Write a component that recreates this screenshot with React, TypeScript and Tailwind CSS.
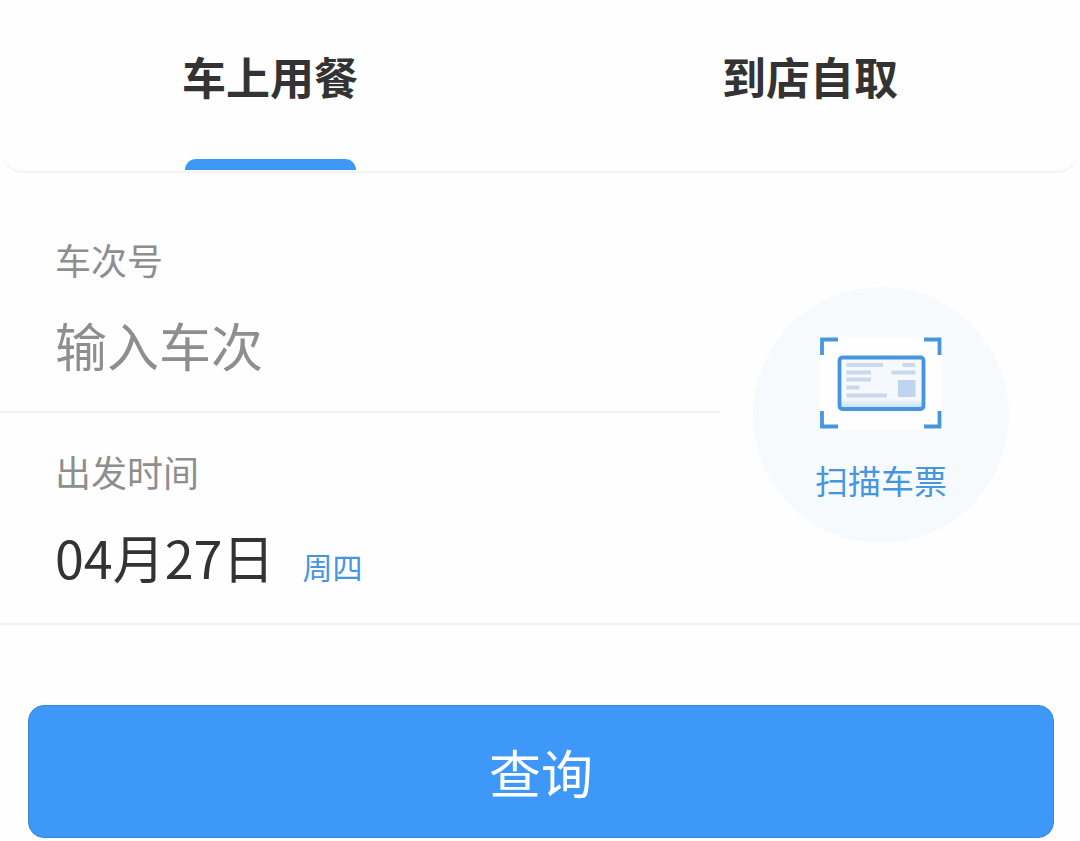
import React, { useState } from 'react';

const tabs = ['车上用餐', '到店自取'];

const TicketIcon = () => (
  <svg viewBox="0 0 122 93" className="w-[122px] h-[93px]" fill="none" aria-hidden="true">
    <defs>
      <linearGradient id="ticketFill" x1="0" y1="0" x2="0" y2="1">
        <stop offset="0.8" stopColor="#f5f9fe" />
        <stop offset="1" stopColor="#c3dbf4" />
      </linearGradient>
    </defs>
    <rect width="122" height="93" fill="#fefefe" />
    {/* Viewfinder corners */}
    <path
      d="M18 2.5H2V18 M104 2.5H119.5V18 M18 89.5H2V74 M104 89.5H119.5V74"
      stroke="#4596df"
      strokeWidth="3.8"
    />
    {/* Ticket */}
    <rect x="19.5" y="20.5" width="84" height="51.5" rx="3" fill="url(#ticketFill)" stroke="#4596df" strokeWidth="3.8" />
    <path
      d="M26.5 28H63 M82.5 28H95 M26.5 35.5H51 M71.5 35.5H95.5 M26.5 42.5H51 M26.5 50.5H39.5 M26.5 58.5H67"
      stroke="#c9d9ed"
      strokeWidth="4"
    />
    <rect x="78" y="43" width="17.5" height="17" fill="#bfd5ef" />
  </svg>
);

const App = () => {
  const [activeTab, setActiveTab] = useState(tabs[0]);
  const [trainNo, setTrainNo] = useState('');

  return (
    <main className="min-h-screen bg-[#fefefe] font-['Noto_Sans_CJK_SC',sans-serif] text-[#333333]">
      {/* Tabs */}
      <div role="tablist" className="flex rounded-b-3xl border-b-2 border-[#f4f4f4]">
        {tabs.map((tab) => (
          <button
            key={tab}
            type="button"
            role="tab"
            aria-selected={tab === activeTab}
            onClick={() => setActiveTab(tab)}
            className="flex flex-1 flex-col items-center gap-[55px] pt-12 pb-px text-[44px] leading-[56px] font-bold"
          >
            {tab}
            <span className={tab === activeTab ? 'h-[11px] w-[171px] rounded-t-xl bg-[#3d98f5]' : 'h-[11px]'} />
          </button>
        ))}
      </div>

      <form onSubmit={(e) => e.preventDefault()}>
        <div className="flex border-b-2 border-[#f0f0f0]">
          <div className="w-2/3">
            <div className="flex flex-col gap-[30px] border-b-2 border-[#f0f0f0] pt-[62px] pb-[34px] pl-[55px]">
              <label htmlFor="train-no" className="text-[36px] leading-[48px] text-[#8e8e8e]">
                车次号
              </label>
              <input
                id="train-no"
                type="text"
                value={trainNo}
                onChange={(e) => setTrainNo(e.target.value)}
                placeholder="输入车次"
                className="h-16 w-full bg-transparent text-[52px] leading-[64px] outline-none placeholder:text-[#8e8e8e]"
              />
            </div>
            <div className="flex flex-col items-start gap-[30px] pt-[34px] pb-[34px] pl-[55px]">
              <span id="date-label" className="text-[36px] leading-[48px] text-[#8e8e8e]">
                出发时间
              </span>
              <button type="button" aria-describedby="date-label" className="flex h-16 items-baseline gap-7">
                <span className="text-[52px] leading-[64px]">04月27日</span>
                <span className="text-[30px] leading-[48px] text-[#4596df]">周四</span>
              </button>
            </div>
          </div>

          {/* Ticket scan */}
          <div className="flex flex-1 items-center justify-center pt-[34px] pr-[38px]">
            <button
              type="button"
              className="flex size-64 shrink-0 flex-col items-center gap-[30px] rounded-full bg-[#f6fafd] pt-[50px]"
            >
              <TicketIcon />
              <span className="text-[33px] leading-[40px] text-[#4596df]">扫描车票</span>
            </button>
          </div>
        </div>

        <div className="pt-20 pr-[26px] pl-7">
          <button
            type="submit"
            className="h-[133px] w-full rounded-2xl border border-[#3a86cf] bg-[#3d98f9] text-[52px] leading-[64px] text-white"
          >
            查询
          </button>
        </div>
      </form>
    </main>
  );
};

export default App;
